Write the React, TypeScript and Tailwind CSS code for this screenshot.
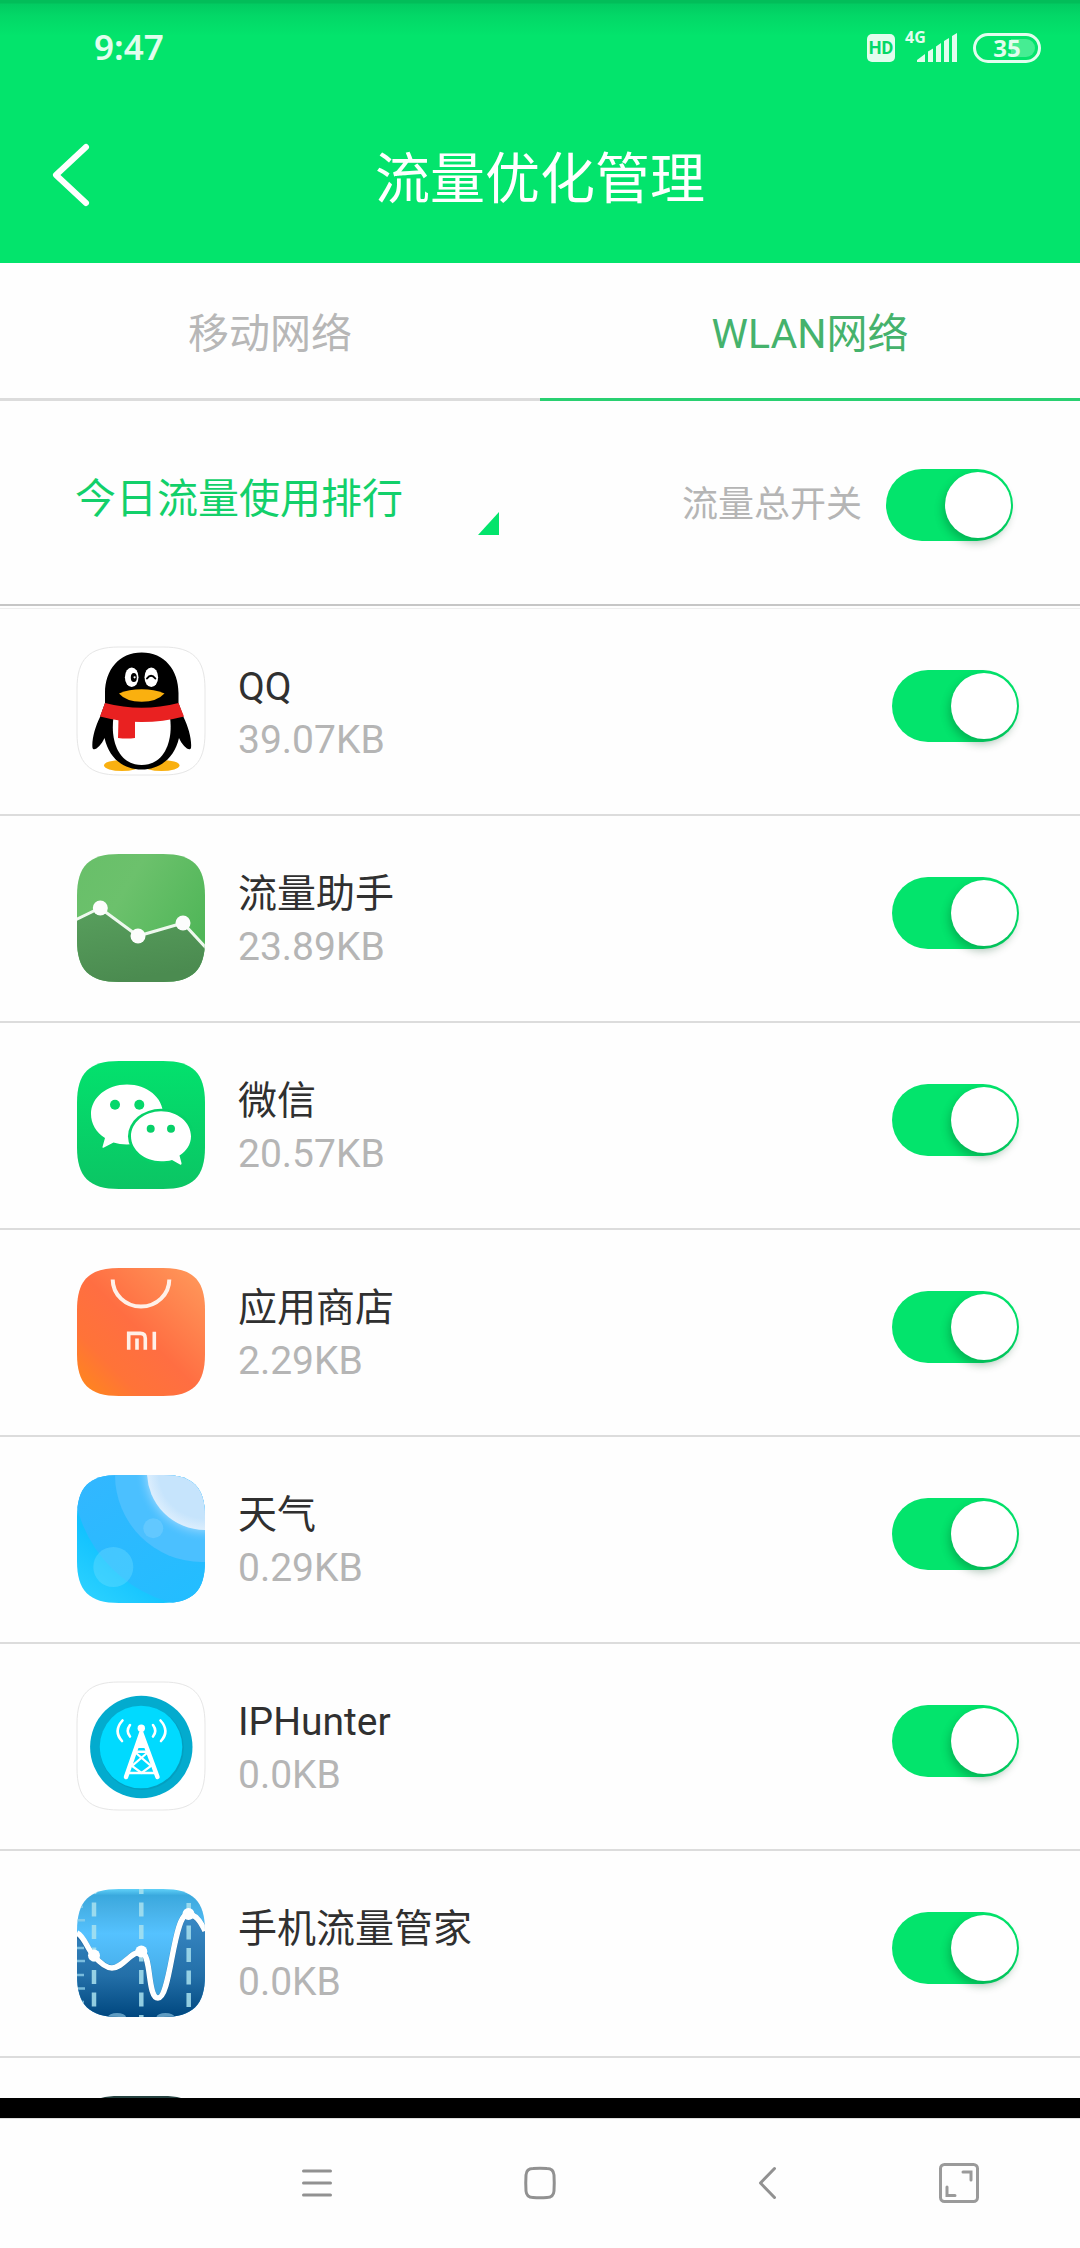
import { useState, type ReactNode } from "react";

interface AppUsage {
  id: string;
  name: string;
  usage: string;
  icon: ReactNode;
}

const TILE =
  "M42 0H86C116 0 128 12 128 42V86C128 116 116 128 86 128H42C12 128 0 116 0 86V42C0 12 12 0 42 0Z";

function Tile({ id, outlined, children }: { id: string; outlined?: boolean; children: ReactNode }) {
  return (
    <svg viewBox="0 0 128 128" className="size-32 shrink-0 overflow-visible" aria-hidden="true">
      <defs>
        <clipPath id={`${id}-tile`}>
          <path d={TILE} />
        </clipPath>
      </defs>
      <g clipPath={`url(#${id}-tile)`}>{children}</g>
      {outlined && <path d={TILE} fill="none" stroke="#e6e6e6" strokeWidth="1" />}
    </svg>
  );
}

function QQIcon() {
  return (
    <Tile id="qq" outlined>
      <rect width="128" height="128" fill="#fff" />
      <ellipse cx="45" cy="118.5" rx="18" ry="5.5" fill="#f9b010" />
      <ellipse cx="84.5" cy="118.5" rx="18" ry="5.5" fill="#f9b010" />
      <path
        d="M64.7 5.5C42 5.5 28 23 28 46V56L23 70C18 80 14.5 93 15.5 101C17 105 24 99 27.5 91C32 111 46 122.5 64.7 122.5C83 122.5 97.5 111 102 91C105.5 99 112.5 105 114 101C115 93 111.5 80 106.5 70L101.5 56V46C101.5 23 87.5 5.5 64.7 5.5Z"
        fill="#000"
      />
      <path d="M36.5 70C33 96 43 118 64.7 118C86 118 96.5 96 93 70Z" fill="#fff" />
      <path d="M28 56Q64.7 65.5 101.5 56L107 69.5Q64.7 80.5 23 69.5Z" fill="#e92121" />
      <path d="M41.5 72H58V91Q50 92 41 91Z" fill="#e92121" />
      <ellipse cx="54.7" cy="30.3" rx="6.8" ry="9.8" fill="#fff" />
      <ellipse cx="74.3" cy="30.3" rx="6.8" ry="9.8" fill="#fff" />
      <ellipse cx="56.8" cy="30.5" rx="3" ry="4.5" fill="#000" />
      <circle cx="57.6" cy="30.3" r="1.1" fill="#fff" />
      <path d="M70 31.5Q74 26 78.3 31.5" fill="none" stroke="#000" strokeWidth="2" strokeLinecap="round" />
      <path d="M42 46.5Q52 42.3 64.7 42.3Q77 42.3 87.5 46.5Q80 54.7 64.7 54.7Q49 54.7 42 46.5Z" fill="#fab00f" />
    </Tile>
  );
}

function TrafficHelperIcon() {
  return (
    <Tile id="traffic">
      <defs>
        <linearGradient id="traffic-top" x1="0" y1="0" x2="1" y2="0.6">
          <stop offset="0" stopColor="#68bf69" />
          <stop offset="0.4" stopColor="#6cc16c" />
          <stop offset="1" stopColor="#50b658" />
        </linearGradient>
        <linearGradient id="traffic-bottom" x1="0" y1="0" x2="0.3" y2="1">
          <stop offset="0" stopColor="#589f5d" />
          <stop offset="1" stopColor="#4b8b50" />
        </linearGradient>
      </defs>
      <rect width="128" height="128" fill="url(#traffic-top)" />
      <path d="M0 65L23 54L61 82L106 69L128 93V128H0Z" fill="url(#traffic-bottom)" />
      <path d="M-2 66L23 54L61 82L106 69L130 95" fill="none" stroke="#eef8ee" strokeWidth="3" />
      <circle cx="23.3" cy="54" r="7.5" fill="#fcfdfc" />
      <circle cx="61" cy="82" r="7.5" fill="#fcfdfc" />
      <circle cx="106" cy="69" r="7.5" fill="#fcfdfc" />
    </Tile>
  );
}

function WeChatIcon() {
  return (
    <Tile id="wechat">
      <defs>
        <linearGradient id="wechat-bg" x1="0" y1="0" x2="0" y2="1">
          <stop offset="0" stopColor="#03e16d" />
          <stop offset="1" stopColor="#0bc564" />
        </linearGradient>
      </defs>
      <rect width="128" height="128" fill="url(#wechat-bg)" />
      <path
        d="M50 23.5C70 23.5 86 36.500 86 53S70 83 50 83.5C45 83.5 40.5 82.5 36.5 81.5L26.5 86.8C25.5 87 25.3 86.3 25.6 85.5L28 77C19 71.5 14 62.5 14 53C14 36.5 30 23.5 50 23.5Z"
        fill="#fff"
      />
      <ellipse cx="84" cy="75.3" rx="33" ry="27.5" fill="#06d168" />
      <path
        d="M84 50.3C100.5 50.3 114 61.5 114 75.3C114 83.5 109.5 90 102.5 94.5L104.5 102C104.7 103.5 104 104 103 103.4L95 98.9C91.5 99.9 88 100.3 84 100.3C67.5 100.3 54 89 54 75.3S67.5 50.3 84 50.3Z"
        fill="#fff"
      />
      <circle cx="38" cy="43.7" r="5" fill="#06d76a" />
      <circle cx="62.3" cy="43.7" r="5" fill="#06d76a" />
      <circle cx="73.7" cy="67.8" r="4" fill="#07d068" />
      <circle cx="94" cy="67.8" r="4" fill="#07d068" />
    </Tile>
  );
}

function StoreIcon() {
  return (
    <Tile id="store">
      <defs>
        <linearGradient id="store-bg" x1="0" y1="1" x2="1" y2="0">
          <stop offset="0" stopColor="#ff8a18" />
          <stop offset="0.25" stopColor="#ff7338" />
          <stop offset="0.5" stopColor="#ff6e42" />
          <stop offset="1" stopColor="#ff9b5c" />
        </linearGradient>
      </defs>
      <rect width="128" height="128" fill="url(#store-bg)" />
      <path d="M35.7 11.5A28.3 27 0 0 0 92.3 11.5" fill="none" stroke="#fff0e8" strokeWidth="4" />
      <g fill="none" stroke="#fff0e8" strokeWidth="3.6">
        <path d="M51.7 81.7V65.4H63.5Q68.3 65.4 68.3 70.5V81.7" />
        <path d="M60 70.5V81.7" />
        <path d="M77.3 63.7V81.7" />
      </g>
    </Tile>
  );
}

function WeatherIcon() {
  return (
    <Tile id="weather">
      <defs>
        <linearGradient id="weather-bg" x1="0" y1="1" x2="0.6" y2="0.2">
          <stop offset="0" stopColor="#30d4ff" />
          <stop offset="0.5" stopColor="#12c2ff" />
          <stop offset="1" stopColor="#2fbaff" />
        </linearGradient>
        <linearGradient id="weather-sky" x1="0.2" y1="0.3" x2="0.7" y2="1">
          <stop offset="0" stopColor="#34b6ff" />
          <stop offset="1" stopColor="#1fbfff" />
        </linearGradient>
        <radialGradient id="weather-sun">
          <stop offset="0.8" stopColor="#c6e4fc" />
          <stop offset="1" stopColor="#dceefd" />
        </radialGradient>
        <radialGradient id="weather-glow">
          <stop offset="0.8" stopColor="#a8dcff" stopOpacity="0.7" />
          <stop offset="1" stopColor="#4cc0ff" stopOpacity="0" />
        </radialGradient>
      </defs>
      <rect width="128" height="128" fill="url(#weather-bg)" />
      <circle cx="128" cy="0" r="132" fill="url(#weather-sky)" />
      <circle cx="125" cy="0" r="87" fill="#4bc0ff" />
      <circle cx="128" cy="-3" r="70" fill="url(#weather-glow)" />
      <circle cx="128" cy="-3" r="58" fill="url(#weather-sun)" />
      <circle cx="76.3" cy="53.3" r="10" fill="#7fd3ff" fillOpacity="0.45" />
      <circle cx="36.3" cy="92" r="20" fill="#6fdcff" fillOpacity="0.38" />
    </Tile>
  );
}

function IPHunterIcon() {
  return (
    <Tile id="iphunter" outlined>
      <rect width="128" height="128" fill="#fff" />
      <circle cx="64.3" cy="65" r="51.2" fill="#03abce" />
      <circle cx="64.8" cy="66" r="42" fill="#049fc0" />
      <circle cx="64" cy="65" r="41.3" fill="#00daff" />
      <g fill="none" stroke="#fff" strokeLinecap="round">
        <path d="M64.3 51L49 95M64.3 51L80.5 95" strokeWidth="4.5" />
        <path d="M58 69.7H71M52 91H77" strokeWidth="2.5" />
        <path d="M59 71L74 84L64.5 91L55 84L70 71" strokeWidth="2.2" />
        <path d="M45.5 38.5Q36 49 45 59" strokeWidth="2.6" />
        <path d="M53 43Q48.5 49 53 54.5" strokeWidth="2.6" />
        <path d="M83.5 38.5Q93 49 84 59" strokeWidth="2.6" />
        <path d="M76 43Q80.5 49 76 54.5" strokeWidth="2.6" />
      </g>
      <circle cx="64.3" cy="46.3" r="3.7" fill="#fff" />
      <path d="M64.3 49L59 66H69.5Z" fill="#fff" />
    </Tile>
  );
}

function ManagerIcon() {
  const curve =
    "C8 48 10 60 17 67C24 75 29 79 35 79C46 79 54 62 64 63C75 64 70 109 81 109C94 109 96 25 111 25C119 25 124 33 128 42";
  return (
    <Tile id="manager">
      <defs>
        <linearGradient id="manager-top" x1="0" y1="0" x2="0" y2="1">
          <stop offset="0" stopColor="#5fd0f8" />
          <stop offset="0.05" stopColor="#3aa9de" />
          <stop offset="0.15" stopColor="#46b0e6" />
          <stop offset="0.35" stopColor="#55c2ff" />
          <stop offset="0.85" stopColor="#3ea2dc" />
        </linearGradient>
        <linearGradient id="manager-bottom" x1="0" y1="0" x2="0" y2="1">
          <stop offset="0" stopColor="#3a8ac6" />
          <stop offset="0.6" stopColor="#236fa8" />
          <stop offset="1" stopColor="#00477f" />
        </linearGradient>
      </defs>
      <rect width="128" height="128" fill="url(#manager-top)" />
      <path d={`M0 44${curve}V128H0Z`} fill="url(#manager-bottom)" />
      <path
        d="M17 -9V128M64.3 -9V128M111.7 14V128"
        stroke="#a9e2ee"
        strokeOpacity="0.85"
        strokeWidth="4.5"
        strokeDasharray="14 8.5"
      />
      <path
        d="M0 17.7H6M0 31.3H8M0 59H7M0 72H8M0 86H7M0 99.5H8M0 113H7"
        stroke="#8fcfea"
        strokeOpacity="0.8"
        strokeWidth="2.5"
      />
      <ellipse cx="40" cy="128" rx="9" ry="4" fill="#5f9cc2" />
      <ellipse cx="88.5" cy="128" rx="9" ry="4" fill="#5f9cc2" />
      <path d={`M0 47${curve}`} fill="none" stroke="#0b3f6e" strokeOpacity="0.35" strokeWidth="6" />
      <path d={`M0 44${curve}`} fill="none" stroke="#fff" strokeWidth="5.5" />
      <circle cx="17" cy="66.5" r="6" fill="#fff" />
      <circle cx="64.3" cy="62.5" r="6" fill="#fff" />
      <circle cx="111.5" cy="25" r="6" fill="#fff" />
    </Tile>
  );
}

const APPS: AppUsage[] = [
  { id: "qq",       name: "QQ",           usage: "39.07KB", icon: <QQIcon /> },
  { id: "traffic",  name: "流量助手",     usage: "23.89KB", icon: <TrafficHelperIcon /> },
  { id: "wechat",   name: "微信",         usage: "20.57KB", icon: <WeChatIcon /> },
  { id: "store",    name: "应用商店",     usage: "2.29KB",  icon: <StoreIcon /> },
  { id: "weather",  name: "天气",         usage: "0.29KB",  icon: <WeatherIcon /> },
  { id: "iphunter", name: "IPHunter",     usage: "0.0KB",   icon: <IPHunterIcon /> },
  { id: "manager",  name: "手机流量管家", usage: "0.0KB",   icon: <ManagerIcon /> },
];

function Switch({ id }: { id: string }) {
  return (
    <input
      id={id}
      type="checkbox"
      role="switch"
      defaultChecked
      className="relative h-[72px] w-[127px] shrink-0 appearance-none rounded-full bg-gray-300 before:absolute before:top-[3px] before:left-[2px] before:size-[66px] before:rounded-full before:bg-white before:shadow-[-2px_5px_8px_rgba(0,70,30,0.3)] checked:bg-[#03e46c] checked:before:left-[59px]"
    />
  );
}

function StatusBar() {
  return (
    <div className="flex h-[95px] items-center justify-between pr-[39px] pl-[94px] text-[#e2fdee]">
      <span className="font-['Noto_Sans'] text-[35px] font-semibold">9:47</span>
      <div className="flex items-center">
        <span className="mr-[10px] flex h-7 w-7 items-center justify-center rounded-[5px] bg-[#e2fdee] text-[18px] font-bold text-[#03d867]">
          HD
        </span>
        <div className="relative mr-4 pl-3">
          <span className="absolute -top-1.5 left-0 font-['Noto_Sans'] text-[16px] leading-5 font-bold">4G</span>
          <svg viewBox="0 0 40 29" className="h-[29px] w-10" fill="currentColor" aria-hidden="true">
            <path d="M0 29V27L8 21V29ZM11 29V18.5L16 15.5V29ZM19 29V13.5L24 10V29ZM27 29V8L32 5V29ZM35 29V3L40 0V29Z" />
          </svg>
        </div>
        <div className="relative flex h-[30px] w-[68px] items-center justify-center rounded-full border-3 border-[#e2fdee]">
          <span className="absolute right-[3px] h-[18px] w-6 rounded-r-full bg-[#46ed93]" />
          <span className="relative font-['Noto_Sans'] text-[24px] leading-none font-bold">35</span>
        </div>
      </div>
    </div>
  );
}

export default function App() {
  const [tab, setTab] = useState<"mobile" | "wlan">("wlan");

  return (
    <div className="flex h-dvh flex-col bg-[#fefefe] font-[Roboto,'Noto_Sans_CJK_SC',sans-serif]">
      <header className="shrink-0 bg-[#03e46c] bg-[linear-gradient(#02bd59_0,#02bd59_3px,#02cb61_4px,#03d867_16px,#03e46c_36px)]">
        <StatusBar />
        <div className="grid h-[168px] grid-cols-[1fr_auto_1fr] items-center">
          <button aria-label="返回" className="ml-[50px] justify-self-start pb-2 text-white">
            <svg viewBox="0 0 42 66" className="h-[66px] w-[42px]" fill="none" stroke="currentColor" strokeWidth="6" strokeLinecap="round" strokeLinejoin="round">
              <path d="M36 5L6 33L36 61" />
            </svg>
          </button>
          <h1 className="text-[55px] leading-[64px] text-white">流量优化管理</h1>
        </div>
      </header>

      <div role="tablist" className="grid shrink-0 grid-cols-2 text-[41px]">
        <button
          role="tab"
          aria-selected={tab === "mobile"}
          onClick={() => setTab("mobile")}
          className={`h-[138px] border-b-3 pt-2 ${
            tab === "mobile" ? "border-[#29d071] text-[#45b26c]" : "border-[#dcdcdc] text-[#b7b7b7]"
          }`}
        >
          移动网络
        </button>
        <button
          role="tab"
          aria-selected={tab === "wlan"}
          onClick={() => setTab("wlan")}
          className={`h-[138px] border-b-3 pt-2 ${
            tab === "wlan" ? "border-[#29d071] text-[#45b26c]" : "border-[#dcdcdc] text-[#b7b7b7]"
          }`}
        >
          WLAN网络
        </button>
      </div>

      <section className="flex h-[205px] shrink-0 items-center justify-between border-b-2 border-[#c6c6c6] pt-1 pr-[67px] pl-[75px]">
        <div className="relative w-[424px]">
          <select aria-label="排行" className="block h-[60px] w-full appearance-none pb-3 text-[41px] leading-[48px] text-[#12d06a] outline-none">
            <option>今日流量使用排行</option>
          </select>
          <svg viewBox="0 0 21 23" className="pointer-events-none absolute right-0 bottom-0 h-[23px] w-[21px]" aria-hidden="true">
            <path d="M21 0V23H0Z" fill="#03e46c" />
          </svg>
        </div>
        <div className="flex items-center gap-6">
          <label htmlFor="master" className="text-[36px] text-[#b5b5b5]">流量总开关</label>
          <Switch id="master" />
        </div>
      </section>

      <ul className="mt-[2px] min-h-0 flex-1 overflow-y-auto border-t border-[#eeeeee] [scrollbar-width:none]">
        {APPS.map((app) => (
          <li key={app.id} className="flex h-[207px] items-start border-b-2 border-[#dcdcdc] pt-[38px] pr-[61px] pl-[77px]">
            {app.icon}
            <div className="mt-[14px] ml-[33px] flex-1 text-[39px] leading-[53px]">
              <label htmlFor={`switch-${app.id}`} className="block text-[#303030]">{app.name}</label>
              <p className="text-[#b5b5b5]">{app.usage}</p>
            </div>
            <div className="mt-[23px] flex">
              <Switch id={`switch-${app.id}`} />
            </div>
          </li>
        ))}
        <li className="pt-[38px] pl-[77px]">
          <Tile id="next">
            <rect width="128" height="128" fill="#24413f" />
          </Tile>
        </li>
      </ul>

      <div className="h-5 shrink-0 bg-black" />

      <nav className="grid h-[130px] shrink-0 grid-cols-[205fr_223fr_223fr_231fr_154fr_44fr] items-center border-t border-[#dedede] pb-[2px] text-[#919191]">
        <button aria-label="最近任务" className="col-start-2 justify-self-center">
          <svg viewBox="0 0 40 40" className="size-10" fill="none" stroke="currentColor" strokeWidth="3" strokeLinecap="round">
            <path d="M6.5 8H33.5M6.5 20H33.5M6.5 32H33.5" />
          </svg>
        </button>
        <button aria-label="主屏幕" className="justify-self-center">
          <svg viewBox="0 0 40 40" className="size-10" fill="none" stroke="currentColor" strokeWidth="3">
            <path d="M13 5.5Q20 5 27 5.5Q33.5 5.5 34 12Q34.5 20 34 28Q33.5 34.5 27 34.5Q20 35 13 34.5Q6.5 34.5 6 28Q5.5 20 6 12Q6.5 5.5 13 5.5Z" />
          </svg>
        </button>
        <button aria-label="后退" className="justify-self-center">
          <svg viewBox="0 0 40 40" className="size-10" fill="none" stroke="currentColor" strokeWidth="3" strokeLinecap="round" strokeLinejoin="round">
            <path d="M27.5 5.5L13.5 20L27.5 34.5" />
          </svg>
        </button>
        <button aria-label="全屏" className="justify-self-center">
          <svg viewBox="0 0 40 40" className="size-10" fill="none" stroke="#9a9a9a" strokeWidth="3">
            <rect x="1.5" y="1.5" width="37" height="37" rx="4" />
            <path d="M24 9H32V17M8 24V32.5H16" strokeLinecap="round" />
          </svg>
        </button>
      </nav>
    </div>
  );
}
